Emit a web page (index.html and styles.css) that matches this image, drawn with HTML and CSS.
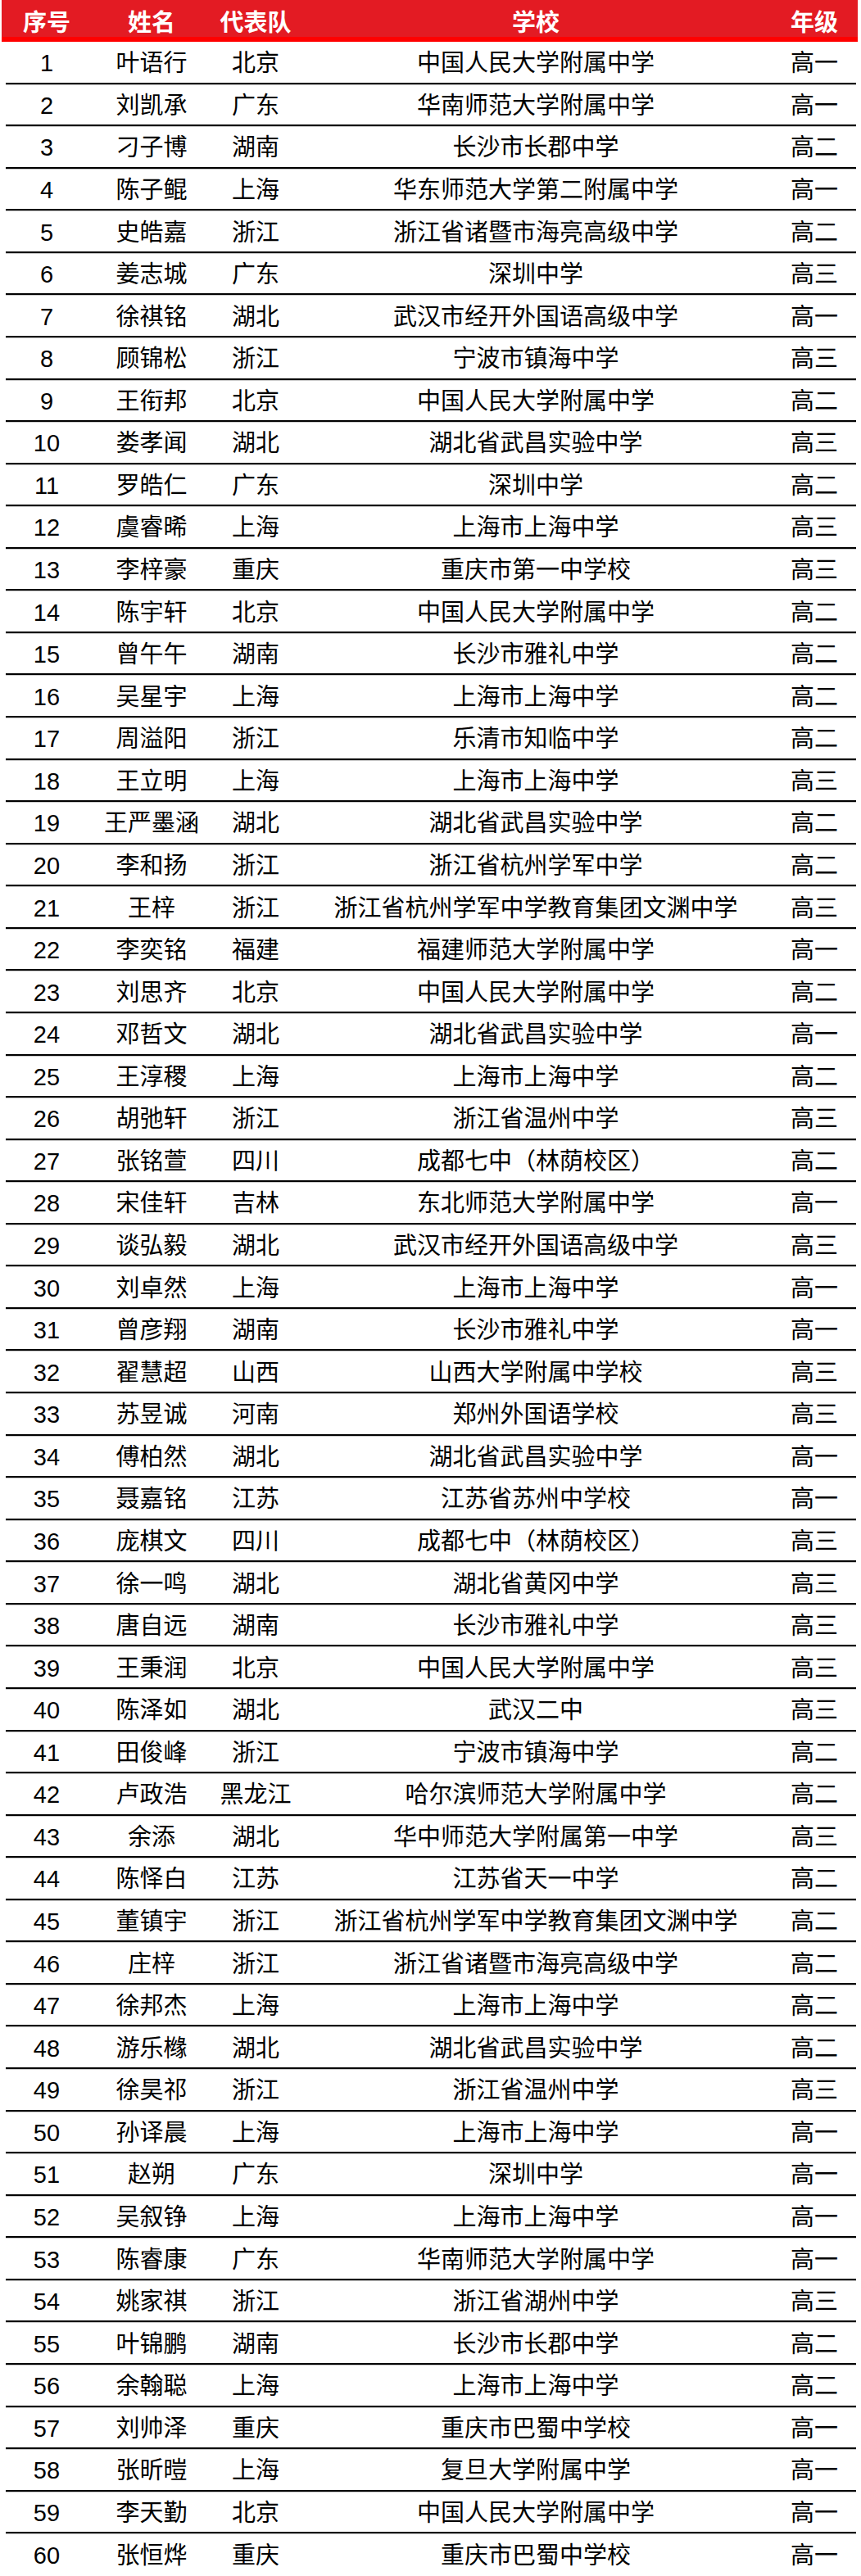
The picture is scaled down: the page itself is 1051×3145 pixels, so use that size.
FILE: index.html
```html
<!DOCTYPE html>
<html lang="zh-CN">
<head>
<meta charset="utf-8">
<title>名单</title>
<link rel="stylesheet" href="styles.css">
</head>
<body>
<div class="sheet">
  <div class="head">
    <div class="c">序号</div><div class="c">姓名</div><div class="c">代表队</div><div class="c">学校</div><div class="c">年级</div>
  </div>
  <div class="rows" id="rows">
<div class="row"><div class="c">1</div><div class="c">叶语行</div><div class="c">北京</div><div class="c">中国人民大学附属中学</div><div class="c">高一</div></div>
<div class="row"><div class="c">2</div><div class="c">刘凯承</div><div class="c">广东</div><div class="c">华南师范大学附属中学</div><div class="c">高一</div></div>
<div class="row"><div class="c">3</div><div class="c">刁子博</div><div class="c">湖南</div><div class="c">长沙市长郡中学</div><div class="c">高二</div></div>
<div class="row"><div class="c">4</div><div class="c">陈子鲲</div><div class="c">上海</div><div class="c">华东师范大学第二附属中学</div><div class="c">高一</div></div>
<div class="row"><div class="c">5</div><div class="c">史皓嘉</div><div class="c">浙江</div><div class="c">浙江省诸暨市海亮高级中学</div><div class="c">高二</div></div>
<div class="row"><div class="c">6</div><div class="c">姜志城</div><div class="c">广东</div><div class="c">深圳中学</div><div class="c">高三</div></div>
<div class="row"><div class="c">7</div><div class="c">徐祺铭</div><div class="c">湖北</div><div class="c">武汉市经开外国语高级中学</div><div class="c">高一</div></div>
<div class="row"><div class="c">8</div><div class="c">顾锦松</div><div class="c">浙江</div><div class="c">宁波市镇海中学</div><div class="c">高三</div></div>
<div class="row"><div class="c">9</div><div class="c">王衔邦</div><div class="c">北京</div><div class="c">中国人民大学附属中学</div><div class="c">高二</div></div>
<div class="row"><div class="c">10</div><div class="c">娄孝闻</div><div class="c">湖北</div><div class="c">湖北省武昌实验中学</div><div class="c">高三</div></div>
<div class="row"><div class="c">11</div><div class="c">罗皓仁</div><div class="c">广东</div><div class="c">深圳中学</div><div class="c">高二</div></div>
<div class="row"><div class="c">12</div><div class="c">虞睿晞</div><div class="c">上海</div><div class="c">上海市上海中学</div><div class="c">高三</div></div>
<div class="row"><div class="c">13</div><div class="c">李梓豪</div><div class="c">重庆</div><div class="c">重庆市第一中学校</div><div class="c">高三</div></div>
<div class="row"><div class="c">14</div><div class="c">陈宇轩</div><div class="c">北京</div><div class="c">中国人民大学附属中学</div><div class="c">高二</div></div>
<div class="row"><div class="c">15</div><div class="c">曾午午</div><div class="c">湖南</div><div class="c">长沙市雅礼中学</div><div class="c">高二</div></div>
<div class="row"><div class="c">16</div><div class="c">吴星宇</div><div class="c">上海</div><div class="c">上海市上海中学</div><div class="c">高二</div></div>
<div class="row"><div class="c">17</div><div class="c">周溢阳</div><div class="c">浙江</div><div class="c">乐清市知临中学</div><div class="c">高二</div></div>
<div class="row"><div class="c">18</div><div class="c">王立明</div><div class="c">上海</div><div class="c">上海市上海中学</div><div class="c">高三</div></div>
<div class="row"><div class="c">19</div><div class="c">王严墨涵</div><div class="c">湖北</div><div class="c">湖北省武昌实验中学</div><div class="c">高二</div></div>
<div class="row"><div class="c">20</div><div class="c">李和扬</div><div class="c">浙江</div><div class="c">浙江省杭州学军中学</div><div class="c">高二</div></div>
<div class="row"><div class="c">21</div><div class="c">王梓</div><div class="c">浙江</div><div class="c">浙江省杭州学军中学教育集团文渊中学</div><div class="c">高三</div></div>
<div class="row"><div class="c">22</div><div class="c">李奕铭</div><div class="c">福建</div><div class="c">福建师范大学附属中学</div><div class="c">高一</div></div>
<div class="row"><div class="c">23</div><div class="c">刘思齐</div><div class="c">北京</div><div class="c">中国人民大学附属中学</div><div class="c">高二</div></div>
<div class="row"><div class="c">24</div><div class="c">邓哲文</div><div class="c">湖北</div><div class="c">湖北省武昌实验中学</div><div class="c">高一</div></div>
<div class="row"><div class="c">25</div><div class="c">王淳稷</div><div class="c">上海</div><div class="c">上海市上海中学</div><div class="c">高二</div></div>
<div class="row"><div class="c">26</div><div class="c">胡弛轩</div><div class="c">浙江</div><div class="c">浙江省温州中学</div><div class="c">高三</div></div>
<div class="row"><div class="c">27</div><div class="c">张铭萱</div><div class="c">四川</div><div class="c">成都七中（林荫校区）</div><div class="c">高二</div></div>
<div class="row"><div class="c">28</div><div class="c">宋佳轩</div><div class="c">吉林</div><div class="c">东北师范大学附属中学</div><div class="c">高一</div></div>
<div class="row"><div class="c">29</div><div class="c">谈弘毅</div><div class="c">湖北</div><div class="c">武汉市经开外国语高级中学</div><div class="c">高三</div></div>
<div class="row"><div class="c">30</div><div class="c">刘卓然</div><div class="c">上海</div><div class="c">上海市上海中学</div><div class="c">高一</div></div>
<div class="row"><div class="c">31</div><div class="c">曾彦翔</div><div class="c">湖南</div><div class="c">长沙市雅礼中学</div><div class="c">高一</div></div>
<div class="row"><div class="c">32</div><div class="c">翟慧超</div><div class="c">山西</div><div class="c">山西大学附属中学校</div><div class="c">高三</div></div>
<div class="row"><div class="c">33</div><div class="c">苏昱诚</div><div class="c">河南</div><div class="c">郑州外国语学校</div><div class="c">高三</div></div>
<div class="row"><div class="c">34</div><div class="c">傅柏然</div><div class="c">湖北</div><div class="c">湖北省武昌实验中学</div><div class="c">高一</div></div>
<div class="row"><div class="c">35</div><div class="c">聂嘉铭</div><div class="c">江苏</div><div class="c">江苏省苏州中学校</div><div class="c">高一</div></div>
<div class="row"><div class="c">36</div><div class="c">庞棋文</div><div class="c">四川</div><div class="c">成都七中（林荫校区）</div><div class="c">高三</div></div>
<div class="row"><div class="c">37</div><div class="c">徐一鸣</div><div class="c">湖北</div><div class="c">湖北省黄冈中学</div><div class="c">高三</div></div>
<div class="row"><div class="c">38</div><div class="c">唐自远</div><div class="c">湖南</div><div class="c">长沙市雅礼中学</div><div class="c">高三</div></div>
<div class="row"><div class="c">39</div><div class="c">王秉润</div><div class="c">北京</div><div class="c">中国人民大学附属中学</div><div class="c">高三</div></div>
<div class="row"><div class="c">40</div><div class="c">陈泽如</div><div class="c">湖北</div><div class="c">武汉二中</div><div class="c">高三</div></div>
<div class="row"><div class="c">41</div><div class="c">田俊峰</div><div class="c">浙江</div><div class="c">宁波市镇海中学</div><div class="c">高二</div></div>
<div class="row"><div class="c">42</div><div class="c">卢政浩</div><div class="c">黑龙江</div><div class="c">哈尔滨师范大学附属中学</div><div class="c">高二</div></div>
<div class="row"><div class="c">43</div><div class="c">余添</div><div class="c">湖北</div><div class="c">华中师范大学附属第一中学</div><div class="c">高三</div></div>
<div class="row"><div class="c">44</div><div class="c">陈怿白</div><div class="c">江苏</div><div class="c">江苏省天一中学</div><div class="c">高二</div></div>
<div class="row"><div class="c">45</div><div class="c">董镇宇</div><div class="c">浙江</div><div class="c">浙江省杭州学军中学教育集团文渊中学</div><div class="c">高二</div></div>
<div class="row"><div class="c">46</div><div class="c">庄梓</div><div class="c">浙江</div><div class="c">浙江省诸暨市海亮高级中学</div><div class="c">高二</div></div>
<div class="row"><div class="c">47</div><div class="c">徐邦杰</div><div class="c">上海</div><div class="c">上海市上海中学</div><div class="c">高二</div></div>
<div class="row"><div class="c">48</div><div class="c">游乐橼</div><div class="c">湖北</div><div class="c">湖北省武昌实验中学</div><div class="c">高二</div></div>
<div class="row"><div class="c">49</div><div class="c">徐昊祁</div><div class="c">浙江</div><div class="c">浙江省温州中学</div><div class="c">高三</div></div>
<div class="row"><div class="c">50</div><div class="c">孙译晨</div><div class="c">上海</div><div class="c">上海市上海中学</div><div class="c">高一</div></div>
<div class="row"><div class="c">51</div><div class="c">赵朔</div><div class="c">广东</div><div class="c">深圳中学</div><div class="c">高一</div></div>
<div class="row"><div class="c">52</div><div class="c">吴叙铮</div><div class="c">上海</div><div class="c">上海市上海中学</div><div class="c">高一</div></div>
<div class="row"><div class="c">53</div><div class="c">陈睿康</div><div class="c">广东</div><div class="c">华南师范大学附属中学</div><div class="c">高一</div></div>
<div class="row"><div class="c">54</div><div class="c">姚家祺</div><div class="c">浙江</div><div class="c">浙江省湖州中学</div><div class="c">高三</div></div>
<div class="row"><div class="c">55</div><div class="c">叶锦鹏</div><div class="c">湖南</div><div class="c">长沙市长郡中学</div><div class="c">高二</div></div>
<div class="row"><div class="c">56</div><div class="c">余翰聪</div><div class="c">上海</div><div class="c">上海市上海中学</div><div class="c">高二</div></div>
<div class="row"><div class="c">57</div><div class="c">刘帅泽</div><div class="c">重庆</div><div class="c">重庆市巴蜀中学校</div><div class="c">高一</div></div>
<div class="row"><div class="c">58</div><div class="c">张昕暟</div><div class="c">上海</div><div class="c">复旦大学附属中学</div><div class="c">高一</div></div>
<div class="row"><div class="c">59</div><div class="c">李天勤</div><div class="c">北京</div><div class="c">中国人民大学附属中学</div><div class="c">高一</div></div>
<div class="row"><div class="c">60</div><div class="c">张恒烨</div><div class="c">重庆</div><div class="c">重庆市巴蜀中学校</div><div class="c">高一</div></div>
  </div>
</div>
</body>
</html>
```
FILE: styles.css
```css
html, body {
  margin: 0;
  padding: 0;
  background: #ffffff;
}
.sheet {
  width: 1051px;
  font-family: "Liberation Sans", "Noto Sans CJK SC", sans-serif;
  color: #000;
}
.head {
  box-sizing: border-box;
  height: 51px;
  margin-left: 2px;
  width: 1045px;
  background: #e31b23;
  border-bottom: 6px solid #ff0000;
  padding-left: 5px;
  padding-top: 6px;
  display: grid;
  grid-template-columns: 100px 156px 98px 586px 94px;
  align-items: center;
  color: #ffffff;
  font-family: "Noto Sans CJK SC", sans-serif;
  font-weight: 700;
  font-size: 29px;
  line-height: 1;
}
.rows {
  margin-left: 7px;
  width: 1038px;
}
.row {
  box-sizing: border-box;
  height: 51.57px;
  display: grid;
  grid-template-columns: 100px 156px 98px 586px 94px;
  align-items: center;
  border-bottom: 2px solid #000;
  box-shadow: 0 1px 0 #c8c8c8;
  padding-top: 4px;
  font-size: 29px;
  line-height: 1;
}
.row:last-child {
  border-bottom: none;
  box-shadow: none;
}
.c {
  text-align: center;
  white-space: nowrap;
}
```
